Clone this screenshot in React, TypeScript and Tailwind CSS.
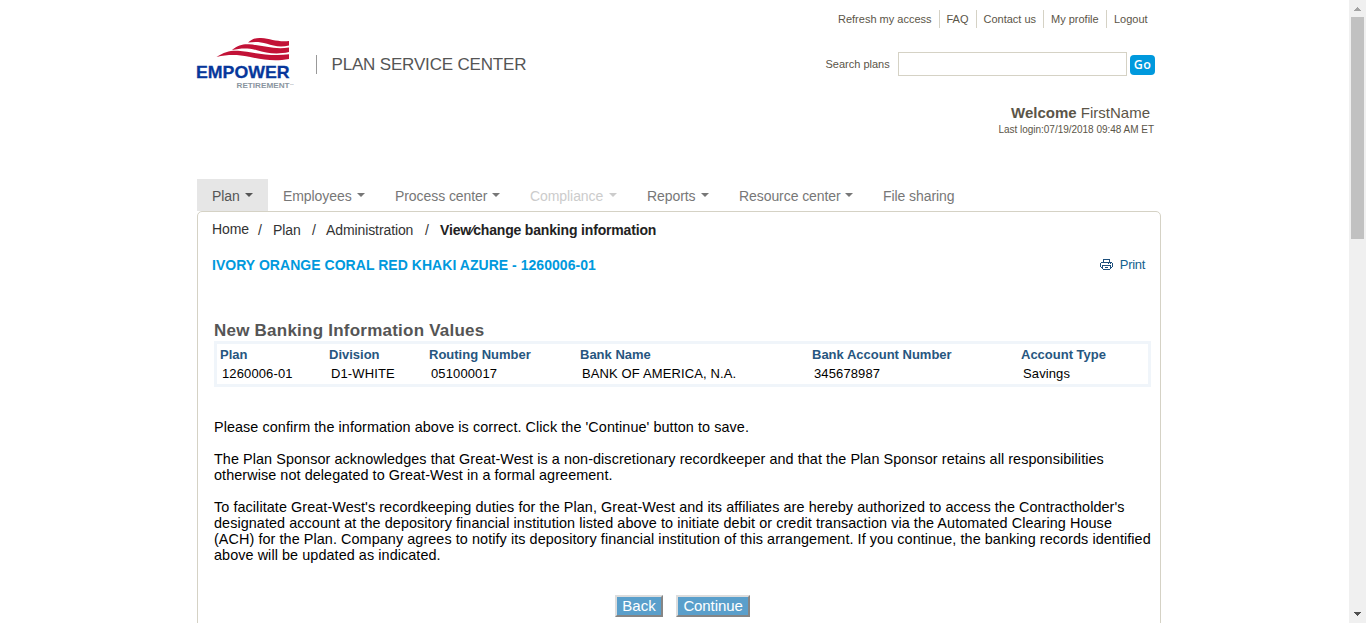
import React from "react";

const topLinks = [
  { label: "Refresh my access", cls: "w-[109px] pl-[8px]" },
  { label: "FAQ", cls: "w-[37px] border-l pl-[6.5px]" },
  { label: "Contact us", cls: "w-[67px] border-l pl-[6.5px]" },
  { label: "My profile", cls: "w-[63px] border-l pl-[7px]" },
  { label: "Logout", cls: "w-[55px] border-l pl-[7px]" },
];

const tabs = [
  { label: "Plan", cls: "w-[71px] bg-[#e6e6e6] text-[#555555]", caret: true },
  { label: "Employees", cls: "w-[112px] text-[#777777]", caret: true },
  { label: "Process center", cls: "w-[135px] text-[#777777]", caret: true },
  { label: "Compliance", cls: "w-[117px] text-[#cccccc]", caret: true },
  { label: "Reports", cls: "w-[92px] text-[#777777]", caret: true },
  { label: "Resource center", cls: "w-[144px] text-[#777777]", caret: true },
  { label: "File sharing", cls: "w-[101px] text-[#777777]", caret: false },
];

const columns = [
  { head: "Plan", value: "1260006-01", cls: "w-[109px]" },
  { head: "Division", value: "D1-WHITE", cls: "w-[100px]" },
  { head: "Routing Number", value: "051000017", cls: "w-[151px]" },
  { head: "Bank Name", value: "BANK OF AMERICA, N.A.", cls: "w-[232px]" },
  { head: "Bank Account Number", value: "345678987", cls: "w-[209px]" },
  { head: "Account Type", value: "Savings", cls: "w-[130px]" },
];

function Logo() {
  return (
    <svg width="100" height="54" viewBox="0 0 100 54" className="-ml-px block shrink-0">
      <g fill="#c21237">
        <path d="M52 6.500C56 2.800 60 1.700 65 2C75 2.800 82 6.300 93 5V9.500C84 11.500 77 9.800 71 7.800C64 5.600 59 5.500 52 6.500Z" />
        <path d="M36 14C42 9.200 47 7.900 53 8.300C66 9.300 78 13.800 93 11.500V16C80 18.900 70 16.800 61 14.200C51 11.600 45 12.200 36 14Z" />
        <path d="M20.500 21C28 15.800 35 14.300 42 14.800C58 16.200 74 21 93 18.300V23C78 26 66 23.500 53 20.800C41 18.400 32 18.500 20.500 21Z" />
      </g>
      <text x="0" y="42" textLength="93.500" lengthAdjust="spacingAndGlyphs" fontFamily="Liberation Sans, sans-serif" fontWeight="700" fontSize="17" fill="#07379b" stroke="#07379b" strokeWidth="0.300">EMPOWER</text>
      <text x="40.500" y="51.700" textLength="53" lengthAdjust="spacingAndGlyphs" fontFamily="Liberation Sans, sans-serif" fontWeight="700" fontSize="7.500" fill="#8a95a0">RETIREMENT</text>
      <text x="94" y="48.500" fontFamily="Liberation Sans, sans-serif" fontSize="2.500" fill="#7b8794">TM</text>
    </svg>
  );
}

function Printer() {
  return (
    <svg width="13" height="11" viewBox="0 0 13 11" shapeRendering="crispEdges" fill="#1d4f7c" className="block">
      <path d="M3 0H10V1H3ZM3 1H4V3H3ZM9 1H10V3H9ZM1 3H12V4H1ZM0 4H1V8H0ZM12 4H13V8H12ZM8 4H9V5H8ZM10 4H11V5H10ZM1 8H3V9H1ZM10 8H12V9H10ZM2 6H11V7H2ZM2 7H3V10H2ZM10 7H11V10H10ZM3 10H10V11H3ZM5 8H8V9H5Z" />
    </svg>
  );
}

function Header() {
  return (
    <header className="flex h-[179px] justify-between">
      <div className="flex pt-[36px]">
        <Logo />
        <div className="ml-[20px] mt-[19px] h-[19px] w-px bg-[#999999]" />
        <div className="ml-[14.5px] mt-[19px] h-5 whitespace-nowrap text-[17px] leading-5 tracking-[-0.17px] text-[#555555]">PLAN SERVICE CENTER</div>
      </div>
      <div className="flex w-[340px] flex-col text-[#5b5548]">
        <nav className="mt-[10px] flex h-[18px] justify-end text-[11px] leading-[18px]">
          {topLinks.map((l) => (
            <a key={l.label} className={`block whitespace-nowrap border-[#d5d2c5] ${l.cls}`}>{l.label}</a>
          ))}
        </nav>
        <div className="mt-[24px] flex h-6 pl-[4px] text-[11px] leading-6">
          <label className="w-[73px] whitespace-nowrap pl-[0.5px]">Search plans</label>
          <input className="block h-6 w-[229px] border border-[#d5d2c5] bg-white outline-none" />
          <button className="ml-[3px] mt-[3px] h-5 w-[25px] rounded-[4px] bg-[#0099dd] font-['Open_Sans',sans-serif] text-[12.5px] font-semibold leading-5 tracking-[0.3px] text-white">Go</button>
        </div>
        <div className="mt-[28px] h-[18px] whitespace-nowrap pr-[11px] text-right text-[15px] leading-[18px]">
          <b>Welcome</b> FirstName
        </div>
        <div className="mt-px h-[14px] whitespace-nowrap pr-[7px] text-right text-[10px] leading-[14px] tracking-[-0.02px]">Last login:07/19/2018 09:48 AM ET</div>
      </div>
    </header>
  );
}

function Scrollbar() {
  return (
    <div className="flex w-[17px] shrink-0 flex-col items-center bg-[#f0f0f0]">
      <svg width="17" height="17" shapeRendering="crispEdges" className="block shrink-0">
        <path d="M8 7H9V8H10V9H11V10H12V11H5V10H6V9H7V8H8Z" fill="#a3a3a3" />
      </svg>
      <div className="h-[222px] w-[13px] bg-[#c1c1c1]" />
      <svg width="17" height="17" shapeRendering="crispEdges" className="mt-auto block shrink-0">
        <path d="M5 6H12V7H11V8H10V9H9V10H8V9H7V8H6V7H5Z" fill="#505050" />
      </svg>
    </div>
  );
}

export default function App() {
  return (
    <div className="flex h-[623px] w-[1366px] overflow-hidden bg-white font-['Liberation_Sans',Arial,sans-serif]">
      <div className="flex-1">
        <div className="ml-[197px] w-[964px]">
          <Header />
          <nav className="flex h-8 bg-white">
            {tabs.map((t) => (
              <a key={t.label} className={`flex items-center justify-between whitespace-nowrap px-[15px] pt-px text-[14px] leading-5 tracking-[-0.07px] ${t.cls}`}>
                {t.label}
                {t.caret && (
                  <svg width="8" height="4" viewBox="0 0 8 4" className="mb-[2px] block shrink-0">
                    <path d="M0 0H8L4 4Z" fill="currentColor" />
                  </svg>
                )}
              </a>
            ))}
          </nav>
          <main className="h-[440px] rounded-t-[5px] border border-[#d5d2c5] bg-white">
            <div className="flex h-[36px] whitespace-nowrap pl-[14px] pt-[8px] text-[14px] leading-5 tracking-[-0.1px] text-[#333333]">
              <a className="-mt-px w-[46px]">Home</a>
              <span className="w-[15px]">/</span>
              <a className="w-[39px]">Plan</a>
              <span className="w-[14px]">/</span>
              <a className="w-[99px]">Administration</a>
              <span className="w-[15px]">/</span>
              <b className="tracking-[-0.17px] text-[#222222]">View⁄change banking information</b>
            </div>
            <div className="flex h-[35px] justify-between pl-[14px] pr-[15px] pt-[7px] leading-5">
              <h2 className="whitespace-nowrap text-[14px] font-bold tracking-[0.04px] text-[#0099dd]">IVORY ORANGE CORAL RED KHAKI AZURE - 1260006-01</h2>
              <a className="flex gap-[7px] text-[13px] tracking-[-0.3px] text-[#14618f]">
                <span className="pt-[4px]"><Printer /></span>
                Print
              </a>
            </div>
            <div className="ml-[16px] mt-[37px] w-[937px]">
              <h1 className="h-[21px] whitespace-nowrap pt-px text-[17px] font-bold leading-[20px] tracking-[0.23px] text-[#555555]">New Banking Information Values</h1>
              <table className="h-[46px] w-[937px] table-fixed border-separate border-spacing-0 border-[3px] border-[#f0f5fa] text-[13px]">
                <thead>
                  <tr className="h-[20px] text-left text-[#27567f]">
                    {columns.map((c) => (
                      <th key={c.head} className={`whitespace-nowrap p-0 pl-[3px] pt-[2px] leading-[18px] ${c.cls}`}>{c.head}</th>
                    ))}
                  </tr>
                </thead>
                <tbody>
                  <tr className="h-[20px] text-black">
                    {columns.map((c) => (
                      <td key={c.head} className="whitespace-nowrap p-0 pb-px pl-[5px] leading-[17px] tracking-[0.12px]">{c.value}</td>
                    ))}
                  </tr>
                </tbody>
              </table>
              <div className="mt-[32px] flex flex-col gap-4 whitespace-nowrap text-[14.4px] leading-4 tracking-[0.075px] text-black">
                <p>Please confirm the information above is correct. Click the 'Continue' button to save.</p>
                <p>The Plan Sponsor acknowledges that Great-West is a non-discretionary recordkeeper and that the Plan Sponsor retains all responsibilities<br />otherwise not delegated to Great-West in a formal agreement.</p>
                <p>To facilitate Great-West's recordkeeping duties for the Plan, Great-West and its affiliates are hereby authorized to access the Contractholder's<br />designated account at the depository financial institution listed above to initiate debit or credit transaction via the Automated Clearing House<br />(ACH) for the Plan. Company agrees to notify its depository financial institution of this arrangement. If you continue, the banking records identified<br />above will be updated as indicated.</p>
              </div>
              <div className="mt-[32px] flex gap-[13px] pl-[401px] text-[15px] leading-[18px] text-white">
                <button className="h-[22px] w-[48px] border-2 border-b-[#858585] border-l-[#dddddd] border-r-[#858585] border-t-[#dddddd] bg-[#5a9fcb]">Back</button>
                <button className="h-[22px] w-[74px] border-2 border-b-[#858585] border-l-[#dddddd] border-r-[#858585] border-t-[#dddddd] bg-[#5a9fcb] tracking-[-0.1px]">Continue</button>
              </div>
            </div>
          </main>
        </div>
      </div>
      <Scrollbar />
    </div>
  );
}
